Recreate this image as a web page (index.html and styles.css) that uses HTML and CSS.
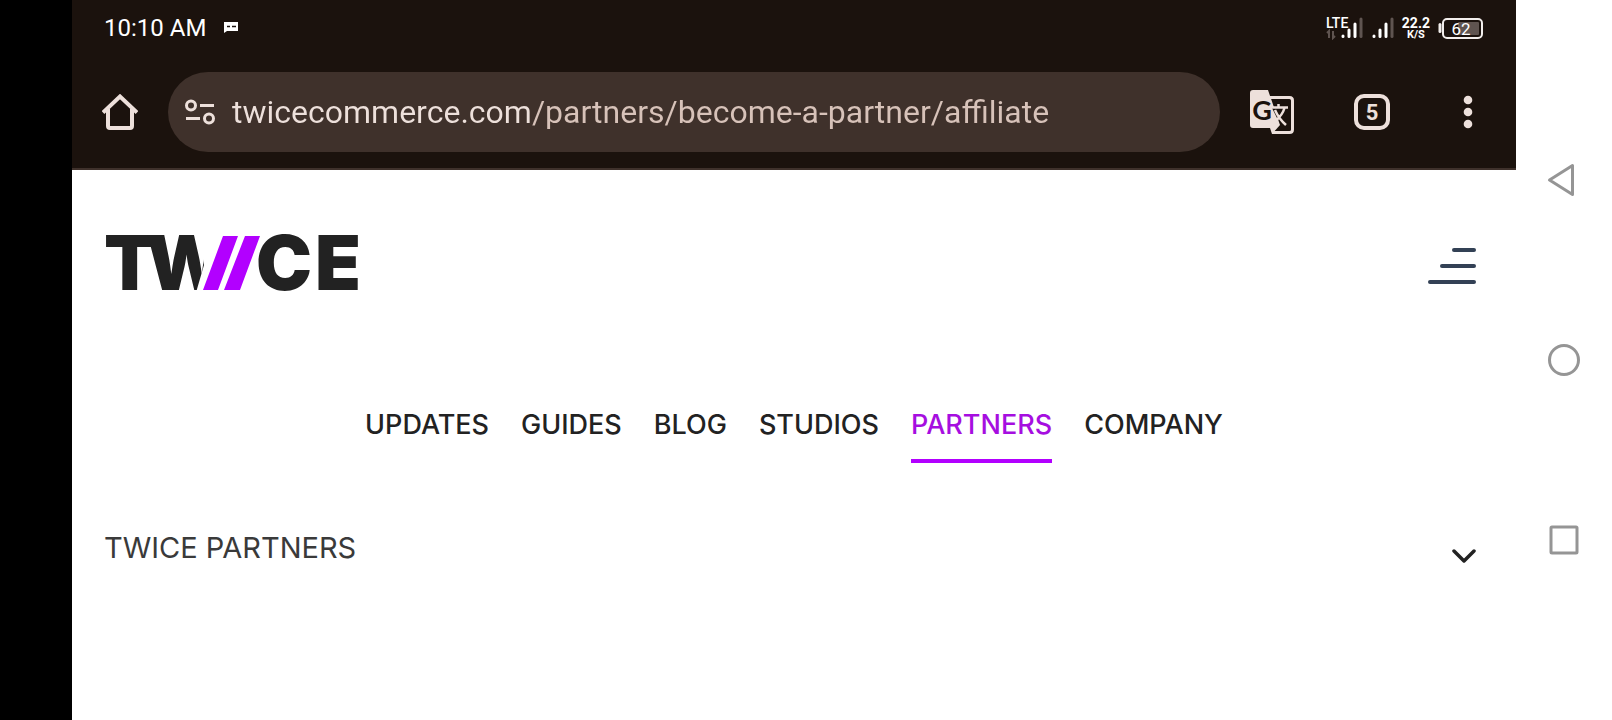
FILE: index.html
```html
<!DOCTYPE html>
<html lang="en">
<head>
  <meta charset="UTF-8">
  <meta name="viewport" content="width=device-width, initial-scale=1.0">
  <title>TWICE Partners</title>
  <link rel="stylesheet" href="styles.css">
</head>
<body>

  <div class="screen">
    <div class="browser">
      <div class="status-bar">
        <span class="clock">10:10 AM</span>
        <svg class="message-icon" width="16" height="12" viewBox="0 0 16 12">
          <path d="M1 0h14v9H4L1 11z" fill="#fff"/>
          <path d="M4 4.500h3M9 4.500h4" stroke="#1b120d" stroke-width="1.500"/>
        </svg>
        <div class="status-icons">
          <svg width="38" height="24" viewBox="0 0 38 24">
            <text class="lte" x="0" y="12">LTE</text>
            <path d="M3 22v-7l-2 2M7 15v7l2-2" fill="none" stroke="#5f5450" stroke-width="2"/>
            <g stroke-width="3" stroke-linecap="round" stroke="#fff">
              <path d="M17 20v.5M23 14v6.500M29 8v12.500"/>
              <path d="M35 3v17.500" stroke="#5f5450"/>
            </g>
          </svg>
          <svg width="22" height="24" viewBox="0 0 22 24">
            <g stroke-width="3" stroke-linecap="round" stroke="#fff">
              <path d="M2 20v.5M8 14v6.500M14 8v12.500"/>
              <path d="M20 3v17.500" stroke="#5f5450"/>
            </g>
          </svg>
          <div class="speed"><span class="speed-value">22.2</span><span class="speed-unit">K/S</span></div>
          <svg width="46" height="24" viewBox="0 0 46 24">
            <path d="M2 8.500v7" stroke="#f2eeec" stroke-width="3" stroke-linecap="round"/>
            <rect x="5" y="3" width="39" height="19" rx="4" fill="none" stroke="#f2eeec" stroke-width="2"/>
            <rect x="20" y="6" width="21" height="13" rx="1" fill="#5f5450"/>
            <text class="battery" x="23" y="19" text-anchor="middle">62</text>
          </svg>
        </div>
      </div>

      <div class="toolbar">
        <button class="tool-button" aria-label="Home">
          <svg width="36" height="36" viewBox="0 0 36 36" fill="none" stroke="#ede0db" stroke-width="4">
            <path d="M1 18.500L18 2.500l17 16" stroke-linejoin="miter"/>
            <path d="M6 15v17q0 2 2 2h20q2 0 2-2V15"/>
          </svg>
        </button>
        <label class="address">
          <svg width="32" height="28" viewBox="0 0 32 28" fill="none" stroke="#ede0db" stroke-width="3">
            <circle cx="7" cy="7.500" r="4.500"/>
            <path d="M16 7.500h14M2 20.500h14"/>
            <circle cx="25" cy="20.500" r="4.500"/>
          </svg>
          <input class="url" type="text" aria-label="Address" value="twicecommerce.com/partners/become-a-partner/affiliate">
        </label>
        <button class="tool-button translate" aria-label="Translate">
          <svg width="44" height="44" viewBox="0 0 44 44">
            <path d="M20 7.500h19.500q3 0 3 3v29q0 3-3 3H22" fill="none" stroke="#ede0db" stroke-width="3"/>
            <path d="M3 0h15l12 35-8 9-2-6H3q-3 0-3-3V3q0-3 3-3z" fill="#ede0db"/>
            <path d="M22 18l5 10 4-5-5-5z" fill="#1b120d"/>
            <g fill="none" stroke="#ede0db" stroke-width="2.500">
              <path d="M22 17.500h16M28.500 14v4M34.500 18q-2 7-9 13M25 20q4 9 11 15"/>
            </g>
            <text class="translate-g" x="12" y="30" text-anchor="middle">G</text>
          </svg>
        </button>
        <button class="tool-button" aria-label="5 open tabs"><span class="tabs">5</span></button>
        <button class="tool-button" aria-label="More">
          <svg width="8" height="32" viewBox="0 0 8 32" fill="#ede0db" overflow="visible">
            <circle cx="4" cy="4" r="4.300"/>
            <circle cx="4" cy="16" r="4.300"/>
            <circle cx="4" cy="28" r="4.300"/>
          </svg>
        </button>
      </div>
    </div>

    <header class="site-header">
      <a class="logo" href="#" aria-label="Twice">
        <svg width="260" height="94" viewBox="0 0 260 94">
          <text class="wordmark" y="74"><tspan x="0">T</tspan><tspan x="42">W</tspan></text>
          <path d="M95 16l5 33-9 31h99V16z" fill="#fff"/>
          <path d="M119 20h15l-20 54H99zM141 20h15l-20 54h-16z" fill="#b200ff"/>
          <text class="wordmark" y="74"><tspan x="152">C</tspan><tspan x="211">E</tspan></text>
        </svg>
      </a>
      <button class="menu-button" aria-label="Menu">
        <span></span>
        <span></span>
        <span></span>
      </button>
    </header>

    <nav class="site-nav">
      <a href="#">UPDATES</a>
      <a href="#">GUIDES</a>
      <a href="#">BLOG</a>
      <a href="#">STUDIOS</a>
      <a class="active" href="#">PARTNERS</a>
      <a href="#">COMPANY</a>
    </nav>

    <button class="section-toggle">
      TWICE PARTNERS
      <svg width="24" height="17" viewBox="0 0 24 17" fill="none" stroke="#222" stroke-width="3.500" stroke-linecap="round" stroke-linejoin="round">
        <path d="M2 3l10 10L22 3"/>
      </svg>
    </button>
  </div>

  <div class="system-nav">
    <button aria-label="Back">
      <svg width="34" height="34" viewBox="0 0 34 34"><path d="M25.500 2.500v29L2.500 17z"/></svg>
    </button>
    <button aria-label="Home screen">
      <svg width="32" height="32" viewBox="0 0 32 32"><circle cx="16" cy="16" r="14.500"/></svg>
    </button>
    <button aria-label="Recent apps">
      <svg width="32" height="32" viewBox="0 0 32 32"><rect x="3" y="3" width="26" height="26" rx="1"/></svg>
    </button>
  </div>

</body>
</html>
```

FILE: styles.css
```css
* {
  box-sizing: border-box;
}

body {
  margin: 0;
  display: flex;
  min-height: 100vh;
  background-color: #fff;
  border-left: 72px solid #000;
  font-family: Inter, sans-serif;
  color: #222;
}

button {
  background: none;
  border: none;
  padding: 0;
  font-family: inherit;
  cursor: pointer;
}

svg {
  display: block;
  flex-shrink: 0;
}

a {
  color: inherit;
  text-decoration: none;
}

.screen {
  flex: 1;
  min-width: 0;
}

.browser {
  background-color: #1b120d;
  border-bottom: 2px solid #3f312b;
  font-family: Roboto, sans-serif;
}

/* status bar */
.status-bar {
  display: flex;
  align-items: center;
  height: 56px;
  padding: 0 32px;
  color: #fff;
}

.clock {
  font-size: 24px;
}

.message-icon {
  margin-left: 17px;
}

.status-icons {
  display: flex;
  align-items: center;
  gap: 8px;
  margin-left: auto;
}

.lte {
  font-size: 14px;
  font-weight: 500;
  fill: #fff;
}

.speed {
  display: flex;
  flex-direction: column;
  align-items: center;
  font-weight: 700;
}

.speed-value {
  font-size: 14px;
  line-height: 13px;
}

.speed-unit {
  font-size: 11px;
  line-height: 10px;
}

.battery {
  font-size: 17px;
  fill: #fff;
}

/* toolbar */
.toolbar {
  display: flex;
  align-items: center;
  height: 112px;
}

.tool-button {
  display: flex;
  align-items: center;
  justify-content: center;
  width: 96px;
  height: 96px;
}

.translate {
  width: 104px;
}

.translate-g {
  font-family: Lato, sans-serif;
  font-size: 27px;
  font-weight: 700;
  fill: #1b120d;
}

.address {
  flex: 1;
  display: flex;
  align-items: center;
  gap: 16px;
  height: 80px;
  padding: 0 32px 0 16px;
  border-radius: 40px;
  background-color: #3f312b;
}

.url {
  flex: 1;
  min-width: 0;
  padding: 0;
  border: none;
  outline: none;
  font-family: Roboto, sans-serif;
  font-size: 32px;
  line-height: 40px;
  color: transparent;
  /* host is lighter than the path */
  background: linear-gradient(to right, #ede0db 300px, #d7c2b9 300px);
  -webkit-background-clip: text;
  background-clip: text;
}

.tabs {
  display: flex;
  align-items: center;
  justify-content: center;
  width: 36px;
  height: 36px;
  border: 4px solid #ede0db;
  border-radius: 10px;
  font-size: 22px;
  font-weight: 700;
  color: #ede0db;
}

/* page */
.site-header {
  display: flex;
  align-items: center;
  justify-content: space-between;
  padding: 46px 40px 0 32px;
}

.wordmark {
  font-size: 75px;
  font-weight: 900;
  fill: #222;
}

.menu-button {
  display: flex;
  flex-direction: column;
  align-items: flex-end;
  gap: 12px;
  padding-top: 6px;
}

.menu-button span {
  width: 48px;
  height: 4px;
  border-radius: 2px;
  background-color: #334155;
}

.menu-button span:nth-child(1) { width: 24px; }
.menu-button span:nth-child(2) { width: 36px; }

.site-nav {
  display: flex;
  justify-content: center;
  gap: 32px;
  margin-top: 98px;
  font-size: 27px;
  font-weight: 500;
  line-height: 34px;
}

.site-nav a {
  padding-bottom: 17px;
  border-bottom: 4px solid transparent;
}

.site-nav .active {
  color: #a60ee0;
  border-bottom-color: #b200ff;
}

.section-toggle {
  display: flex;
  align-items: flex-end;
  justify-content: space-between;
  width: 100%;
  margin-top: 68px;
  padding: 0 40px 0 32px;
  font-size: 29px;
  line-height: 34px;
  color: #3a3a3a;
}

/* android buttons */
.system-nav {
  display: flex;
  flex-direction: column;
  justify-content: center;
  align-items: center;
  gap: 84px;
  width: 96px;
}

.system-nav button {
  display: flex;
  align-items: center;
  justify-content: center;
  width: 96px;
  height: 96px;
}

.system-nav svg {
  fill: none;
  stroke: #959595;
  stroke-width: 3px;
  stroke-linejoin: round;
}
```
